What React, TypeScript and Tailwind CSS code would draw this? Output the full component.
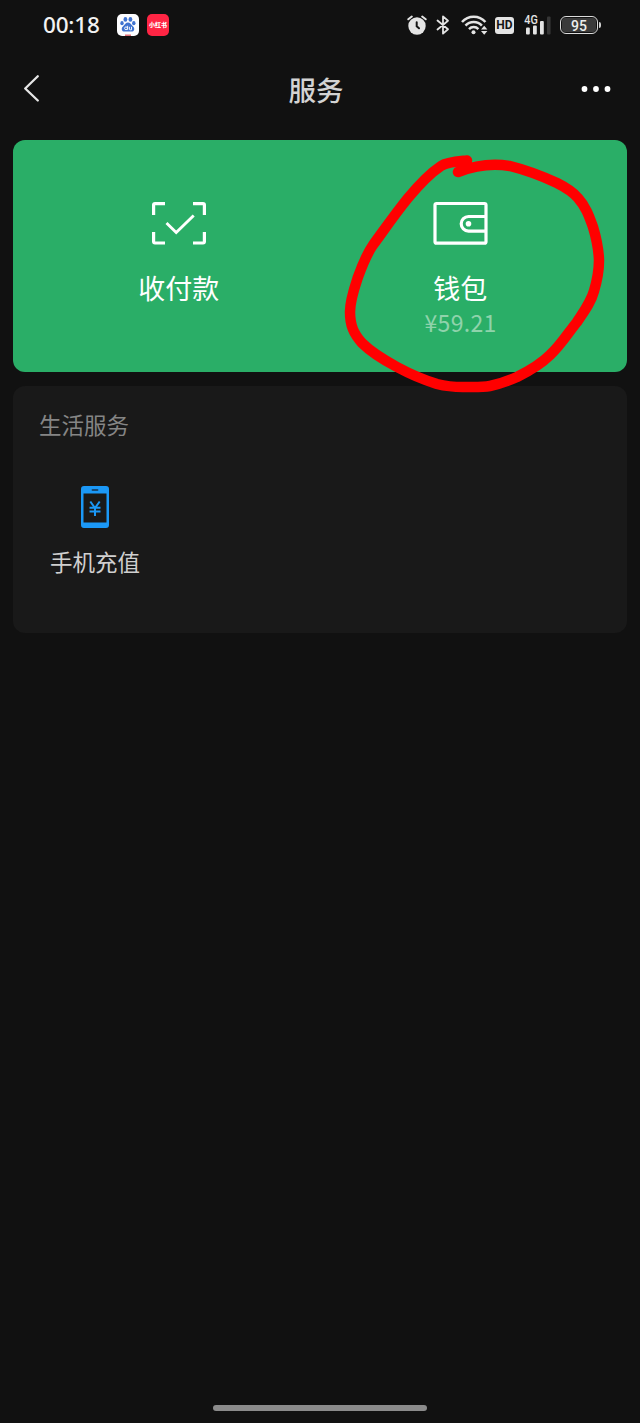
import type { ReactNode } from "react";

function BaiduBadge() {
  return (
    <svg className="h-[22px] w-[22px]" viewBox="0 0 22 22">
      <rect width="22" height="22" rx="5" fill="#fdfdff" />
      <g fill="#3f72d0">
        <ellipse cx="8.4" cy="5.4" rx="1.9" ry="2.4" />
        <ellipse cx="13.4" cy="5.4" rx="1.9" ry="2.4" />
        <ellipse cx="5" cy="9.2" rx="1.7" ry="2.1" />
        <ellipse cx="16.8" cy="9.2" rx="1.7" ry="2.1" />
        <path d="M11 8.600c2 0 2.900 1.700 4.200 3 1.300 1.300 2.300 2.200 2 3.900-.4 2-2.100 2.300-3.700 2H8.500c-1.600.3-3.300 0-3.700-2-.3-1.700.7-2.600 2-3.900 1.300-1.300 2.200-3 4.200-3z" />
      </g>
      <g fill="none" stroke="#fff" strokeWidth="0.900">
        <circle cx="9" cy="14.300" r="1.400" />
        <path d="M10.600 11.800v4M12.400 12.800v2.200q0 .8.800.8h1.300v-3" />
      </g>
      <path d="M8 21.200h6" stroke="#d84b55" strokeWidth="1.200" />
    </svg>
  );
}

function AlarmIcon() {
  return (
    <svg className="h-5 w-5" viewBox="0 0 20 20" fill="none" strokeLinecap="round">
      <circle cx="10" cy="11" r="8.700" fill="#e4e4e4" />
      <path d="M1.300 4.300 4.800 1.500M18.700 4.300l-3.500-2.800" stroke="#e4e4e4" strokeWidth="2" />
      <path d="M9.700 7.300v4l2.300 2" stroke="#151515" strokeWidth="2" />
    </svg>
  );
}

function BluetoothIcon() {
  return (
    <svg className="h-5 w-[14px]" viewBox="0 0 14 20" fill="none" stroke="#e4e4e4" strokeWidth="1.800" strokeLinejoin="round" strokeLinecap="round">
      <path d="M1.500 5.500 12 14.300 7 18.600V1.400l5 4.300L1.500 14.500" />
    </svg>
  );
}

function WifiIcon() {
  return (
    <svg className="h-5 w-[27px]" viewBox="0 0 27 20" fill="none" stroke="#e4e4e4" strokeWidth="2.500">
      <path d="M1 7a15.500 15.500 0 0 1 23.400 0M4.500 10.700a11 11 0 0 1 16.400 0M8 14.100a6.500 6.500 0 0 1 9.400 0" />
      <circle cx="12.500" cy="17.300" r="2" fill="#e4e4e4" stroke="none" />
      <path d="M20 14.500l3.200-3.700 3.200 3.700zM20 16l3.200 3.700 3.200-3.700z" fill="#e4e4e4" stroke="none" />
    </svg>
  );
}

function SignalIcon() {
  return (
    <svg className="h-[26px] w-[28px]" viewBox="0 -2 28 26">
      <text x="0.300" y="10" fill="#e4e4e4" fontFamily="Roboto, sans-serif" fontSize="12.500" fontWeight="500" textLength="13.500" lengthAdjust="spacingAndGlyphs">4G</text>
      <g fill="#e4e4e4">
        <rect x="2" y="13.500" width="3.800" height="7" rx="1" />
        <rect x="9" y="11.500" width="3.800" height="9" rx="1" />
        <rect x="16" y="7" width="3.800" height="13.500" rx="1" />
      </g>
      <rect x="23" y="2.500" width="3.600" height="18" rx="1" fill="#363636" />
    </svg>
  );
}

function StatusBar() {
  return (
    <header className="flex h-[50px] items-center pl-[43px] pr-[39px]">
      <span className="w-[74px] whitespace-nowrap font-['Noto_Sans',sans-serif] text-[22.500px] leading-none font-medium tracking-[-0.200px] text-[#f2f2f2]">00:18</span>
      <BaiduBadge />
      <span className="ml-[8px] flex h-[22px] w-[22px] items-center justify-center rounded-[5px] bg-[#ff2544]">
        <span className="whitespace-nowrap font-['Noto_Sans_CJK_SC',sans-serif] text-[6px] leading-none font-black text-white">小红书</span>
      </span>
      <div className="ml-auto flex items-center">
        <AlarmIcon />
        <span className="ml-[9px] flex"><BluetoothIcon /></span>
        <span className="ml-[11px] flex"><WifiIcon /></span>
        <span className="ml-[7px] flex h-[17px] w-[19px] items-center justify-center rounded-[3px] bg-[#e4e4e4] font-['Roboto',sans-serif] text-[12px] leading-none font-bold text-[#151515]">HD</span>
        <span className="ml-[10px] flex"><SignalIcon /></span>
        <span className="ml-[8px] flex h-[18px] w-[38px] items-center justify-center rounded-[6px] border-[1.500px] border-[#dcdcdc] p-px">
          <span className="flex h-full w-full items-center justify-center rounded-[3px] bg-[#3a3a3a] pt-[2px] font-['Roboto',sans-serif] text-[14px] leading-none font-medium text-[#eee]">95</span>
        </span>
        <span className="ml-px h-[6px] w-[2px] rounded-r bg-[#cfcfcf]" />
      </div>
    </header>
  );
}

function NavBar() {
  return (
    <nav className="flex h-[90px] items-start justify-between pl-[23px] pr-[29px]">
      <svg className="mt-[24px] h-[29px] w-[28px]" viewBox="0 0 28 29" fill="none" stroke="#e6e6e6" strokeWidth="2.300" strokeLinecap="round" strokeLinejoin="round">
        <path d="M14.800 2.200 2.200 14.500l12.600 12" />
      </svg>
      <h1 className="mt-[19px] text-[27.500px] leading-[40px] font-medium text-[#d3d3d3]">服务</h1>
      <svg className="mt-[36px] h-[6px] w-[30px]" viewBox="0 0 30 6" fill="#fff">
        <circle cx="3.500" cy="3" r="2.900" />
        <circle cx="15" cy="3" r="2.900" />
        <circle cx="26.500" cy="3" r="2.900" />
      </svg>
    </nav>
  );
}

function Tile({ icon, label, amount }: { icon: ReactNode; label: string; amount?: string }) {
  return (
    <div className="flex flex-1 flex-col items-center">
      {icon}
      <span className="mt-[23px] text-[27px] leading-[40px] text-white">{label}</span>
      {amount && (
        <span className="-mt-px scale-x-[0.96] text-[24px] leading-[30px] tracking-[0.300px] text-[#8fd3ab]">{amount}</span>
      )}
    </div>
  );
}

function ScanIcon() {
  return (
    <svg className="h-[44px] w-[56px]" viewBox="0 0 56 44" fill="none" stroke="#fff" strokeWidth="3.200">
      <path d="M2.600 14V4q0-1.400 1.400-1.400h10M42 2.600h10q1.400 0 1.400 1.400v10M53.400 31v9.600q0 1.400-1.400 1.400H42M14 42H4q-1.400 0-1.400-1.400V31" />
      <path d="m15.500 22 9.700 9.500 17.500-17" strokeWidth="2.900" />
    </svg>
  );
}

function WalletIcon() {
  return (
    <svg className="h-[44px] w-[56px]" viewBox="0 0 56 44" fill="none" stroke="#fff" strokeWidth="3.200">
      <rect x="3" y="2.500" width="51" height="39.700" rx="1.500" />
      <path d="M54 15.500H36.500a7.300 7.300 0 0 0 0 14.600H54" />
      <circle cx="36.500" cy="22.700" r="2.800" fill="#fff" stroke="none" />
    </svg>
  );
}

function TopUpIcon() {
  return (
    <svg className="h-[42px] w-[28px]" viewBox="0 0 28 42">
      <path fillRule="evenodd" fill="#1b98f6" d="M3 0h22a3 3 0 0 1 3 3v36a3 3 0 0 1-3 3H3a3 3 0 0 1-3-3V3a3 3 0 0 1 3-3zM2.500 7.500v29h23v-29z" />
      <path d="M11.500 4h5" stroke="#174a75" strokeWidth="1.800" strokeLinecap="round" />
      <path d="m9.300 15.500 4.700 6.500 4.700-6.500M8.500 21.800h11M8.500 25.600h11M14 22v8" fill="none" stroke="#1b98f6" strokeWidth="2" />
    </svg>
  );
}

function HandDrawnRing() {
  return (
    <svg className="pointer-events-none absolute top-[14px] left-[330px] h-[246px] w-[266px]" viewBox="343 154 266 246" fill="none" stroke="#ff0000" strokeWidth="10.500" strokeLinecap="round" strokeLinejoin="round">
      <path d="M467 160.500C457 161.500 447 162 441 166C429 174 418 186 408 198C395 214 384 230 373 245C366 255 362 266 358 277C354 289 350 300 350 312C350 326 354 334 362 343C370 351 384 360 397 367C410 374 424 380 437 384C447 386.500 454 387 463 387C473 387 482 387.500 490 386C500 384 508 381 517 377C529 371 541 364 550 355C561 345 568 333 577 322C585 310 591 302 594 291C597 281 599 270 599 260C598.500 248 596 237 593 227C589 216 586 207 578 198C573 192 565 187 557 183C542 176 526 170 510 166C495 163.500 476 165 458 172" />
    </svg>
  );
}

export default function App() {
  return (
    <div className="flex h-[1423px] w-[640px] flex-col bg-[#111111] font-['Noto_Sans_CJK_SC',sans-serif]">
      <StatusBar />
      <NavBar />
      <main className="flex flex-col gap-[14px] px-[13px]">
        <section className="relative flex h-[232px] rounded-[12px] bg-[#2aae67] pr-[26px] pl-[25px] pt-[61px]">
          <Tile icon={<ScanIcon />} label="收付款" />
          <Tile icon={<WalletIcon />} label="钱包" amount="¥59.21" />
          <HandDrawnRing />
        </section>
        <section className="h-[247px] rounded-[12px] bg-[#191919] pt-[22px] pl-[26px]">
          <h2 className="text-[22.500px] leading-[32px] text-[#858585]">生活服务</h2>
          <div className="mt-[46px] flex w-[112px] flex-col items-center">
            <TopUpIcon />
            <span className="mt-[17px] text-[22.500px] leading-[32px] text-[#d0d0d0]">手机充值</span>
          </div>
        </section>
      </main>
      <footer className="mt-auto mb-[12px] flex h-[6px] justify-center">
        <span className="h-[6px] w-[214px] rounded-full bg-[#8b8b8b]" />
      </footer>
    </div>
  );
}
